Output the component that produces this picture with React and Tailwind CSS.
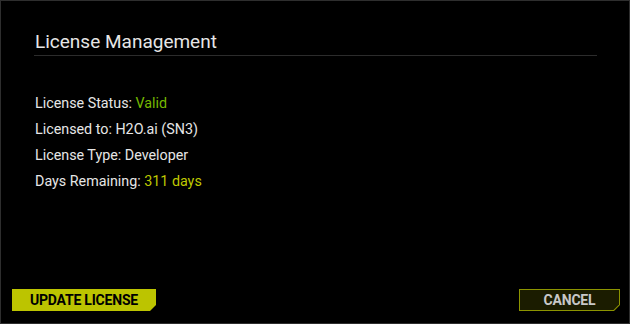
import React from "react";

const rows = [
    { label: "License Status:", value: "Valid", color: "text-[#76b900]" },
    { label: "Licensed to:", value: "H2O.ai (SN3)", color: "text-[#e6e6e6]" },
    { label: "License Type:", value: "Developer", color: "text-[#e6e6e6]" },
    { label: "Days Remaining:", value: "311 days", color: "text-[#bfc800]" },
];

const App = () => {
    return (
        <div className="w-[630px] h-[324px] bg-black border border-[#2e2e2e] flex flex-col font-['Roboto',sans-serif] text-[#e6e6e6]">
            <div className="pt-[30px] pl-[33px] pr-[32px]">
                <h1 className="text-[19px] leading-[22px] pl-px pb-[2px] border-b border-[#2c2c2c] font-normal">
                    License Management
                </h1>
            </div>

            <div className="pt-[34px] pl-[34px] flex flex-col">
                {rows.map((row) => (
                    <div key={row.label} className="text-[14.3px] leading-[26px]">
                        {row.label} <span className={row.color}>{row.value}</span>
                    </div>
                ))}
            </div>

            <div className="mt-auto mb-[12px] pl-[11px] pr-[9px] flex justify-between items-end">
                <button className="w-[144px] h-[22px] bg-[#bcc400] text-black text-[14px] font-bold tracking-[-0.2px] flex items-center justify-center [clip-path:polygon(0_0,100%_0,100%_calc(100%-6px),calc(100%-6px)_100%,0_100%)]">
                    UPDATE LICENSE
                </button>
                <div className="w-[101px] h-[22px] p-px bg-[#8c9400] [clip-path:polygon(0_0,100%_0,100%_calc(100%-6px),calc(100%-6px)_100%,0_100%)]">
                    <button className="w-full h-full bg-[#1b1c00] text-[#c8c8c8] text-[14px] font-bold tracking-[-0.2px] flex items-center justify-center [clip-path:polygon(0_0,100%_0,100%_calc(100%-5.5px),calc(100%-5.5px)_100%,0_100%)]">
                        CANCEL
                    </button>
                </div>
            </div>
        </div>
    );
};

export default App;
